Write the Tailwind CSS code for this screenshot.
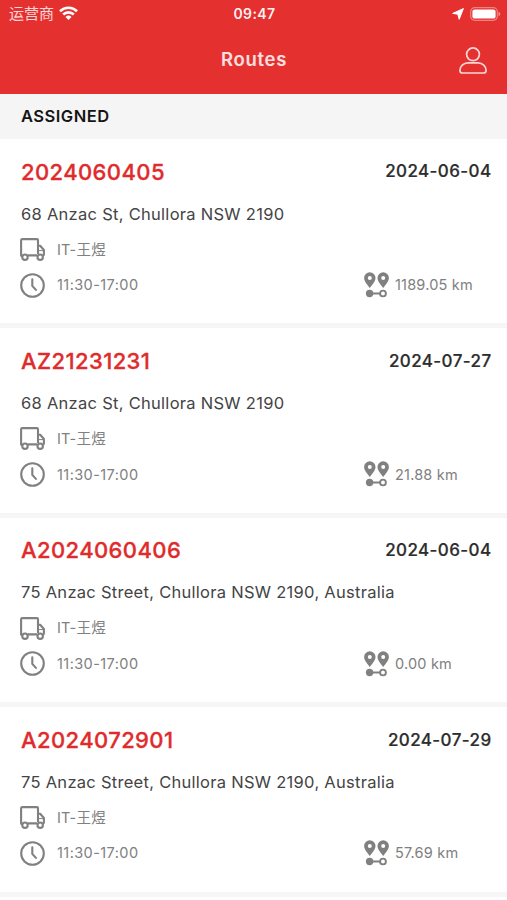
<!DOCTYPE html>
<html lang="en">
<head>
<meta charset="utf-8">
<meta name="viewport" content="width=device-width, initial-scale=1">
<title>Routes</title>
<script src="https://cdn.jsdelivr.net/npm/@tailwindcss/browser@4"></script>
</head>
<body class="bg-white font-[Inter,'Noto_Sans_CJK_SC',sans-serif]">
<div class="h-[900px] overflow-hidden">
<header class="bg-[#e53030] text-white h-[94px] flex flex-col">
  <div class="h-[27px] grid grid-cols-3 items-center pl-[9px] pr-[6px]">
    <div class="flex items-center gap-[5px]">
      <span class="text-[15px] leading-[27px] text-white/80">运营商</span>
      <svg class="w-[19px] h-[14px] -mt-px" viewBox="0 0 19 14" fill="none" stroke="#fff" stroke-width="2.6"><path d="M1 5.2a12.2 12.2 0 0 1 17 0M4.2 8.5a7.6 7.6 0 0 1 10.6 0"/><path d="M9.5 14 6.5 11a4.3 4.3 0 0 1 6 0z" fill="#fff" stroke="none"/></svg>
    </div>
    <div class="text-center text-[14px] font-semibold tracking-[0.4px] text-white/95 -ml-px">09:47</div>
    <div class="flex items-center justify-end gap-[6px]">
      <svg class="w-[12px] h-[12px]" viewBox="0 0 12 12" fill="#fff"><path d="M11.4.6 7.2 11.300 5.800 6.200.7 5.400z" stroke="#fff" stroke-width="1" stroke-linejoin="round"/></svg>
      <svg class="w-[31px] h-[14px]" viewBox="0 0 31 14"><rect x=".7" y=".7" width="26.6" height="12.6" rx="4" fill="none" stroke="#fff" stroke-opacity=".4" stroke-width="1.2"/><rect x="2.4" y="2.4" width="23.2" height="9.2" rx="2.2" fill="#fff"/><path d="M28.6 4.8v4.4q1.7-.7 1.7-2.2t-1.7-2.2z" fill="#fff" fill-opacity=".5"/></svg>
    </div>
  </div>
  <div class="h-[66px] grid grid-cols-3 items-center pl-[21px] pr-[20px]">
    <span></span>
    <h1 class="text-center text-[18.500px] font-semibold tracking-[0.7px] text-white/85">Routes</h1>
    <svg class="w-[28px] h-[27px] justify-self-end" viewBox="0 0 28 27" fill="none" stroke="#fff" stroke-opacity=".8" stroke-width="1.7"><circle cx="14" cy="7.3" r="6.4"/><path d="M9 15.8h10c4.6 0 8.1 3.6 8.1 7.6 0 1.7-1 2.6-2.6 2.6h-21C1.900 26 .9 25.100.9 23.400c0-4 3.500-7.600 8.100-7.600z"/></svg>
  </div>
</header>
<h2 class="h-[45px] pb-px bg-[#f5f5f5] pl-[21px] flex items-center text-[16.500px] font-semibold tracking-[0.5px] text-[#151515]">ASSIGNED</h2>
<main id="routes"></main>
</div>
<script>
const routes = [
  ['2024060405', '2024-06-04', '68 Anzac St, Chullora NSW 2190', '1189.05 km'],
  ['AZ21231231', '2024-07-27', '68 Anzac St, Chullora NSW 2190', '21.88 km'],
  ['A2024060406', '2024-06-04', '75 Anzac Street, Chullora NSW 2190, Australia', '0.00 km'],
  ['A2024072901', '2024-07-29', '75 Anzac Street, Chullora NSW 2190, Australia', '57.69 km']
];
document.getElementById('routes').innerHTML = routes.map(([id, date, address, distance]) => `
<article class="h-[189.4px] pt-[16.600px] pl-[21px] pr-[15.500px] border-b-[5px] border-[#f6f6f6]">
  <div class="h-[33px] flex items-center justify-between">
    <span class="text-[22px] font-medium tracking-[0.4px] text-[#e02b2d] [-webkit-text-stroke:0.3px_#e02b2d]">${id}</span>
    <span class="text-[17px] font-medium tracking-[0.4px] text-[#2d2d2d] [-webkit-text-stroke:0.2px_#2d2d2d]">${date}</span>
  </div>
  <p class="mt-[13px] h-[24px] leading-[24px] text-[16.500px] tracking-[0.28px] text-[#444] whitespace-nowrap">${address}</p>
  <div class="-ml-px mt-[6px] h-[36px] flex items-center text-[14.500px] text-[#808080]">
    <svg class="w-[25px] h-[23px] mr-[12px]" viewBox="0 0 25 23" fill="none" stroke="#808080" stroke-width="2.100" stroke-linejoin="round"><path d="M2.200 18.200H1.900Q1.100 18.200 1.100 17.200V2.200Q1.100 1.100 2.200 1.100H17Q18 1.100 18 2.200V16M8 17.400H17M18 7.800h2.200L23.900 12v4.500q0 1-.9 1"/><path d="M19 12.600h4.500" stroke-width="1"/><circle cx="5" cy="19.200" r="2.700"/><circle cx="20.200" cy="19.200" r="2.700"/></svg>
    <span class="h-[22px] leading-[22px] tracking-[0.2px]">IT-王煜</span>
  </div>
  <div class="-ml-px h-[35px] flex items-center text-[14.500px] text-[#808080]">
    <svg class="w-[25px] h-[25px] mr-[12px]" viewBox="0 0 25 25" fill="none" stroke="#808080" stroke-width="2.100" stroke-linecap="round" stroke-linejoin="round"><circle cx="12.500" cy="12.500" r="11.300"/><path d="M12.300 6.300v6.600l3.600 4"/></svg>
    <span class="w-[307px] tracking-[0.420px]">11:30-17:00</span>
    <svg class="w-[25px] h-[26px] mr-[6px]" viewBox="0 0 25 26" fill="#808080"><path fill-rule="evenodd" d="M5.800.3a5.700 5.700 0 0 1 5.700 5.700c0 3.600-3.200 6.600-5.700 10C3.300 12.600.1 9.600.1 6A5.700 5.700 0 0 1 5.800.3zm0 3.700a2 2 0 1 0 0 4 2 2 0 0 0 0-4zM19.200.3a5.700 5.700 0 0 1 5.700 5.700c0 3.600-3.200 6.600-5.700 10-2.500-3.400-5.700-6.400-5.700-10A5.700 5.700 0 0 1 19.200.3zm0 3.700a2 2 0 1 0 0 4 2 2 0 0 0 0-4z"/><circle cx="5.600" cy="21.500" r="3.700"/><path d="M8 20.500h8v2H8z"/><circle cx="19" cy="21.500" r="2.900" fill="#fff" stroke="#808080" stroke-width="1.900"/></svg>
    <span class="tracking-[0.200px]">${distance}</span>
  </div>
</article>`).join('');
</script>
</body>
</html>
